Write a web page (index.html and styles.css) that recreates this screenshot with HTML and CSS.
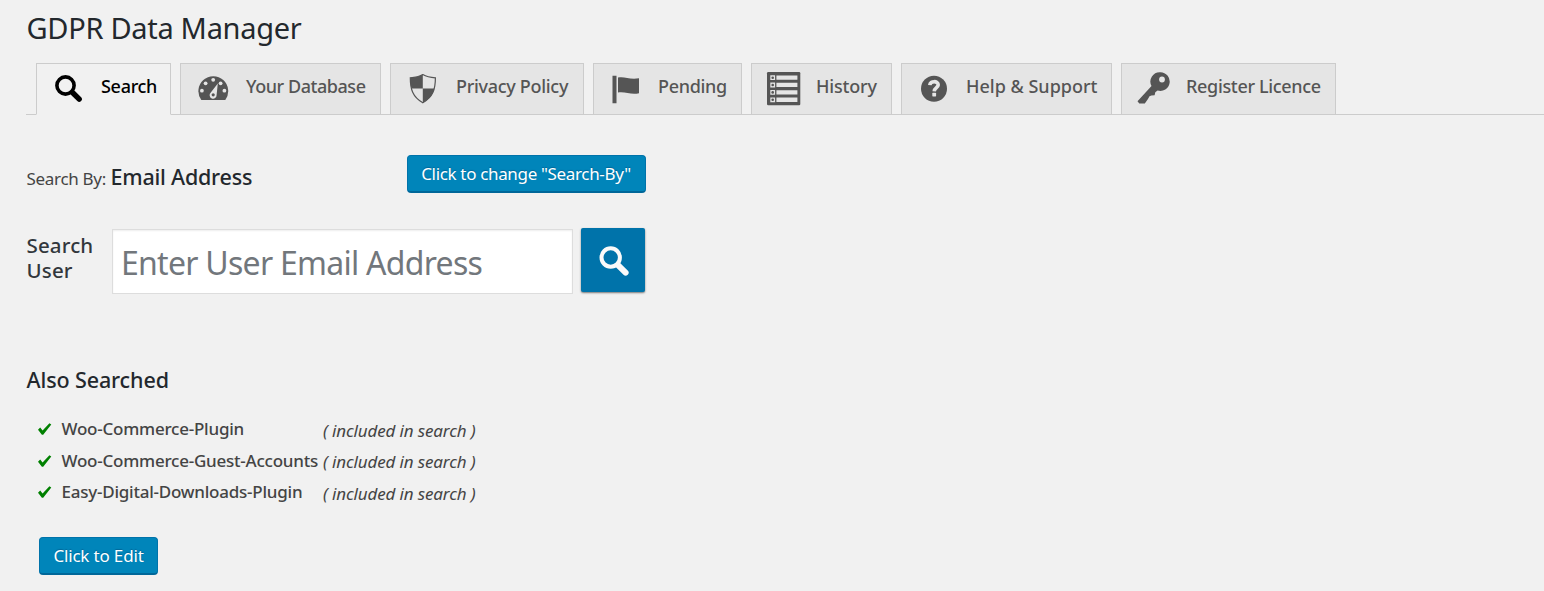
FILE: index.html
```html
<!DOCTYPE html>
<html lang="en">
<head>
<meta charset="utf-8">
<title>GDPR Data Manager</title>
<link rel="stylesheet" href="styles.css">
</head>
<body>
<main class="page">
  <h1 class="title"><span>GDPR Data Manager</span></h1>

  <nav class="tabs">
    <a class="tab tab-search active">
      <svg class="icon" viewBox="0 0 36 36"><circle cx="15.5" cy="15.5" r="8.6" fill="none" stroke="currentColor" stroke-width="3.6"/><path d="M22.5 22.5 29.2 29.2" stroke="currentColor" stroke-width="5.4" stroke-linecap="round"/></svg>
      <span>Search</span>
    </a>
    <a class="tab tab-database">
      <svg class="icon" viewBox="0 0 36 36"><path d="M6.3 30A14.9 14.9 0 1 1 30.3 30Z" fill="currentColor"/><g fill="#e5e5e5"><circle cx="6.9" cy="20.7" r="1.9"/><circle cx="10.6" cy="13.3" r="1.9"/><circle cx="18.2" cy="9.8" r="1.9"/><circle cx="25.6" cy="13.3" r="1.9"/><circle cx="29.4" cy="20.7" r="1.9"/><path d="M22.8 13.4 21.6 25A3.5 3.5 0 1 1 15.8 22.6Z"/></g><circle cx="18.2" cy="24.8" r="1.6" fill="currentColor"/></svg>
      <span>Your Database</span>
    </a>
    <a class="tab tab-privacy">
      <svg class="icon" viewBox="0 0 36 36"><path d="M18.8 4.6C15.5 6.6 11 7.6 6.3 7.8 6.3 19 8.5 27 18.8 32.8 29.1 27 31.4 19 31.4 7.8 26.6 7.6 22.1 6.6 18.8 4.6Z" fill="#e5e5e5" stroke="currentColor" stroke-width="1.2"/><path d="M18.8 4.6C15.5 6.6 11 7.6 6.3 7.8 6.3 12 6.6 15.5 7.5 18.5H18.8ZM18.8 18.5V32.8C25.5 29 29 24.5 30.3 18.5Z" fill="currentColor"/></svg>
      <span>Privacy Policy</span>
    </a>
    <a class="tab tab-pending">
      <svg class="icon" viewBox="0 0 36 36"><path d="M5.5 5.7H9.5V33.3H5.5ZM11 7.6C18 6.3 22 9.8 32 8.3V23.2C24 25.2 18.5 21.3 11 22.5Z" fill="currentColor"/></svg>
      <span>Pending</span>
    </a>
    <a class="tab tab-history">
      <svg class="icon" viewBox="0 0 36 36"><rect x="2" y="2" width="33.3" height="33.3" rx="1.2" fill="currentColor"/><path d="M5.3 5.3h4.8v4.8h-4.8zM11.4 5.5h21v4.3h-21zM5.3 12.6h4.8v4.8h-4.8zM11.4 12.8h21v4.3h-21zM5.3 20h4.8v4.8h-4.8zM11.4 20.2h21v4.3h-21zM5.3 27.4h4.8v4.8h-4.8zM11.4 27.6h21v4.3h-21z" fill="#e5e5e5"/><g fill="currentColor"><circle cx="7.7" cy="7.7" r="1.3"/><circle cx="7.7" cy="15" r="1.3"/><circle cx="7.7" cy="22.4" r="1.3"/><circle cx="7.7" cy="29.8" r="1.3"/></g></svg>
      <span>History</span>
    </a>
    <a class="tab tab-help">
      <svg class="icon" viewBox="0 0 36 36"><circle cx="19" cy="18.7" r="13" fill="currentColor"/><path d="M14.8 15.2C15 10.5 23.3 10.6 23.2 14.9 23.1 17.6 19.4 17.6 19.2 21.3" fill="none" stroke="#e5e5e5" stroke-width="3.6"/><rect x="17.3" y="22.8" width="3.8" height="3.6" rx=".6" fill="#e5e5e5"/></svg>
      <span>Help &amp; Support</span>
    </a>
    <a class="tab tab-register">
      <svg class="icon" viewBox="0 0 36 36"><path d="M25.5 2.2A9.4 9.4 0 1 1 22.6 20.6L20.3 22.3 19.6 25.3 16.3 25.6 14.5 26.3 12.8 29.3 9.8 33.4 4.3 33.4 2.5 31.2 16.5 16A9.4 9.4 0 0 1 25.5 2.2Z" fill="currentColor"/><circle cx="27" cy="9.5" r="2.9" fill="#e5e5e5"/></svg>
      <span>Register Licence</span>
    </a>
  </nav>

  <section class="search-by">
    <span class="by-label">Search By:</span>
    <strong class="by-value">Email Address</strong>
    <button class="button change"><span>Click to change "Search-By"</span></button>
  </section>

  <section class="search-row">
    <label class="user-label" for="email">Search<br>User</label>
    <input class="email" id="email" type="text" placeholder="Enter User Email Address">
    <button class="submit" aria-label="Search">
      <svg viewBox="0 0 64 64"><circle cx="29.7" cy="29.5" r="9.2" fill="none" stroke="currentColor" stroke-width="4"/><path d="M37 37.2 44.6 44.6" stroke="currentColor" stroke-width="6" stroke-linecap="round"/></svg>
    </button>
  </section>

  <section class="also">
    <h2 class="also-title"><span>Also Searched</span></h2>
    <ul class="sources">
      <li><svg class="check" viewBox="0 0 16 14"><path d="M1 7.8 3.2 5.6 5.6 8.6 12.4 1.2 14.3 2.5 6.2 12.7H4.9Z" fill="currentColor"/></svg><span class="name">Woo-Commerce-Plugin</span><em>( included in search )</em></li>
      <li><svg class="check" viewBox="0 0 16 14"><path d="M1 7.8 3.2 5.6 5.6 8.6 12.4 1.2 14.3 2.5 6.2 12.7H4.9Z" fill="currentColor"/></svg><span class="name">Woo-Commerce-Guest-Accounts</span><em>( included in search )</em></li>
      <li><svg class="check" viewBox="0 0 16 14"><path d="M1 7.8 3.2 5.6 5.6 8.6 12.4 1.2 14.3 2.5 6.2 12.7H4.9Z" fill="currentColor"/></svg><span class="name">Easy-Digital-Downloads-Plugin</span><em>( included in search )</em></li>
    </ul>
    <button class="button edit"><span>Click to Edit</span></button>
  </section>
</main>
</body>
</html>
```
FILE: styles.css
```css
* { box-sizing: border-box; }
body {
  margin: 0;
  background: #f1f1f1;
  color: #444;
  font-family: "Noto Sans", "Open Sans", sans-serif;
  overflow: hidden;
}
button, input { font-family: inherit; }
.page { padding-left: 26px; height: 591px; }
.title {
  margin: 0;
  height: 63px;
  padding-top: 8px;
  font-size: 29px;
  line-height: 40px;
  font-weight: 400;
  letter-spacing: -.3px;
  color: #23282d;
  white-space: nowrap;
}
.title span, .by-label, .user-label, .also-title span { padding-left: .5px; }
.tabs {
  display: flex;
  gap: 9px;
  height: 52px;
  padding-left: 10px;
  border-bottom: 1px solid #ccc;
}
.tab {
  display: flex;
  height: 52px;
  padding: 6px 0 0 13px;
  border: 1px solid #ccc;
  background: #e5e5e5;
  color: #555;
  font-size: 18px;
  font-weight: 550;
  line-height: 33px;
  white-space: nowrap;
}
.tab.active { background: #f1f1f1; border-bottom-color: #f1f1f1; color: #000; }
.icon { flex: none; width: 36px; height: 36px; margin-right: 15px; }
.tab-search { width: 135px; letter-spacing: -.3px; }
.tab-database { width: 201px; padding-left: 14px; letter-spacing: -.45px; }
.tab-privacy { width: 194px; letter-spacing: -.3px; }
.tab-privacy .icon { margin-right: 16px; }
.tab-pending { width: 149px; letter-spacing: -.3px; }
.tab-history { width: 141px; letter-spacing: -.2px; }
.tab-help { width: 211px; }
.tab-register { width: 215px; letter-spacing: -.33px; }

.search-by { display: flex; height: 114px; padding-top: 40px; }
.by-label { width: 84.5px; font-size: 17px; line-height: 48px; letter-spacing: -.3px; white-space: nowrap; }
.by-value { width: 296px; font-size: 21.5px; line-height: 44px; font-weight: 500; letter-spacing: -.22px; color: #23282d; white-space: nowrap; }
.button {
  height: 38px;
  padding: 1px 0 0;
  border: 1px solid #0073aa;
  border-bottom: 2px solid #006799;
  border-radius: 4px;
  background: #0085ba;
  color: #fff;
  font-size: 17px;
  line-height: 34px;
  text-shadow: 0 -1px 1px #006799;
  white-space: nowrap;
}
.change { width: 239px; letter-spacing: -.34px; }

.search-row { display: flex; height: 131px; }
.user-label { width: 86px; padding-top: 4px; font-size: 20.5px; line-height: 25px; font-weight: 500; letter-spacing: .15px; color: #32373c; }
.email {
  width: 461px;
  height: 65px;
  padding: 2px 8px 0;
  border: 1px solid #ddd;
  box-shadow: inset 0 1px 2px rgba(0, 0, 0, .07);
  background: #fff;
  font-size: 32px;
  letter-spacing: -.73px;
}
.email::placeholder { color: #72777c; opacity: 1; }
.submit {
  width: 64px;
  height: 64px;
  margin: -1px 0 0 8px;
  padding: 0;
  border: 0;
  border-radius: 2px;
  background: #0073aa;
  box-shadow: 0 1px 2px rgba(0, 0, 0, .5);
  color: #fafafa;
}
.submit svg { display: block; width: 64px; height: 64px; }

.also-title { margin: 0; padding-top: 4px; font-size: 21.5px; line-height: 32px; font-weight: 500; letter-spacing: -.12px; color: #23282d; }
.sources { list-style: none; margin: 0; padding: 17px 0 0 11px; }
.sources li { display: flex; height: 31.7px; line-height: 31px; font-size: 17px; white-space: nowrap; }
.check { width: 16px; height: 14px; margin: 9px 8.5px 0 0; color: #008000; }
.name { width: 261.5px; font-weight: 500; letter-spacing: -.23px; }
.sources em { padding-top: 1.5px; letter-spacing: -.14px; }
.edit { width: 119px; margin: 29px 0 0 13px; letter-spacing: -.17px; }
```
